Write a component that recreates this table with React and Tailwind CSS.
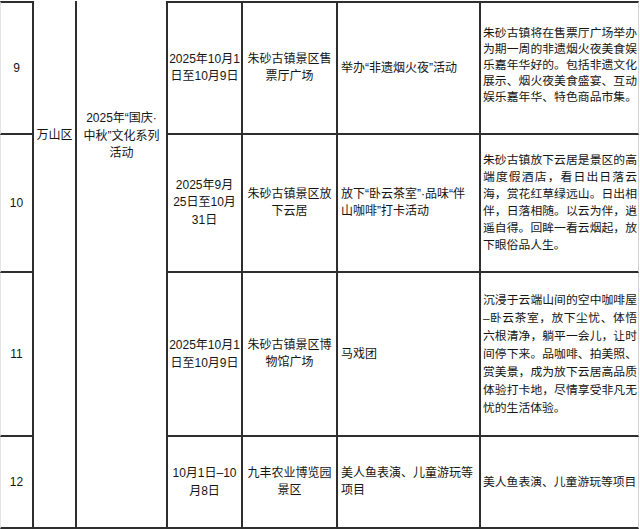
import React from "react";

const B = "border-[#2e2e2e]";

function Lines({ lines, className = "" }) {
  return (
    <div className={className}>
      {lines.map((l, i) => (
        <div key={i} className="whitespace-nowrap">{l}</div>
      ))}
    </div>
  );
}

function Just({ lines, lh, justLast }) {
  return (
    <div className={`w-full text-[11.8px] ${lh}`}>
      {lines.map((l, i) => (
        <div
          key={i}
          className={
            i < lines.length - 1 || justLast
              ? "whitespace-nowrap text-justify [text-align-last:justify]"
              : "whitespace-nowrap text-left"
          }
        >
          {l}
        </div>
      ))}
    </div>
  );
}

const rows = [
  {
    n: "9",
    date: ["2025年10月1", "日至10月9日"],
    dlh: "leading-[17px]",
    place: ["朱砂古镇景区售", "票厅广场"],
    act: ["举办“非遗烟火夜”活动"],
    desc: [
      "朱砂古镇将在售票厅广场举办",
      "为期一周的非遗烟火夜美食娱",
      "乐嘉年华好的。包括非遗文化",
      "展示、烟火夜美食盛宴、互动",
      "娱乐嘉年华、特色商品市集。",
    ],
    desclh: "leading-[16px]",
    descPad: "pb-[6px]",
    justLast: true,
  },
  {
    n: "10",
    date: ["2025年9月", "25日至10月", "31日"],
    dlh: "leading-[17.5px]",
    place: ["朱砂古镇景区放", "下云居"],
    act: ["放下“卧云茶室”·品味“伴", "山咖啡”打卡活动"],
    desc: [
      "朱砂古镇放下云居是景区的高",
      "端度假酒店，看日出日落云",
      "海，赏花红草绿远山。日出相",
      "伴，日落相随。以云为伴，逍",
      "遥自得。回眸一看云烟起，放",
      "下眼俗品人生。",
    ],
    desclh: "leading-[17px]",
    descPad: "",
  },
  {
    n: "11",
    date: ["2025年10月1", "日至10月9日"],
    dlh: "leading-[18px]",
    place: ["朱砂古镇景区博", "物馆广场"],
    act: ["马戏团"],
    desc: [
      "沉浸于云端山间的空中咖啡屋",
      "–卧云茶室，放下尘忧、体悟",
      "六根清净，躺平一会儿，让时",
      "间停下来。品咖啡、拍美照、",
      "赏美景，成为放下云居高品质",
      "体验打卡地，尽情享受非凡无",
      "忧的生活体验。",
    ],
    desclh: "leading-[18px]",
    descPad: "",
  },
  {
    n: "12",
    date: ["10月1日–10", "月8日"],
    dlh: "leading-[18px]",
    place: ["九丰农业博览园", "景区"],
    act: ["美人鱼表演、儿童游玩等", "项目"],
    desc: ["美人鱼表演、儿童游玩等项目"],
    desclh: "leading-[18px]",
    descPad: "",
  },
];

const rowStart = ["row-start-1", "row-start-2", "row-start-3", "row-start-4"];

export default function App() {
  return (
    <div className="w-[640px] h-[529px] bg-white overflow-hidden pt-[1px] text-[12px] text-[#151515] [font-family:'Liberation_Sans','Noto_Sans_CJK_SC',sans-serif]">
      <div className="grid grid-cols-[34px_43px_91px_75px_95px_143px_158px] grid-rows-[134px_138px_164px_92px]">
        {rows.map((r, i) => {
          const top = i === 0 ? `border-t-2 ${B}` : "";
          const rs = rowStart[i];
          return (
            <React.Fragment key={r.n}>
              <div className={`col-start-1 ${rs} ${top} border-r-2 border-b-2 ${B} border-l border-l-[#e4e4e4] flex items-center justify-center`}>
                {r.n}
              </div>
              <div className={`col-start-4 ${rs} ${top} border-r-2 border-b-2 ${B} flex items-center justify-center text-center`}>
                <Lines lines={r.date} className={r.dlh} />
              </div>
              <div className={`col-start-5 ${rs} ${top} border-r-2 border-b-2 ${B} flex items-center justify-center text-center`}>
                <Lines lines={r.place} className="leading-[17.5px]" />
              </div>
              <div className={`col-start-6 ${rs} ${top} border-r-2 border-b-2 ${B} flex items-center pl-[3px]`}>
                <Lines lines={r.act} className="leading-[17px]" />
              </div>
              <div className={`col-start-7 ${rs} ${top} border-b-2 ${B} border-r border-r-[#d2d2d2] flex items-center pl-[2px] pr-[1px] ${r.descPad}`}>
                <Just lines={r.desc} lh={r.desclh} justLast={r.justLast} />
              </div>
            </React.Fragment>
          );
        })}
        <div className={`col-start-2 row-start-1 row-span-4 border-r-2 border-b-2 ${B} flex justify-center pt-[126px] leading-[17px]`}>
          万山区
        </div>
        <div className={`col-start-3 row-start-1 row-span-4 border-r-2 border-b-2 ${B} flex justify-center text-center pt-[109px]`}>
          <Lines lines={["2025年“国庆·", "中秋”文化系列", "活动"]} className="leading-[17.5px]" />
        </div>
      </div>
    </div>
  );
}
